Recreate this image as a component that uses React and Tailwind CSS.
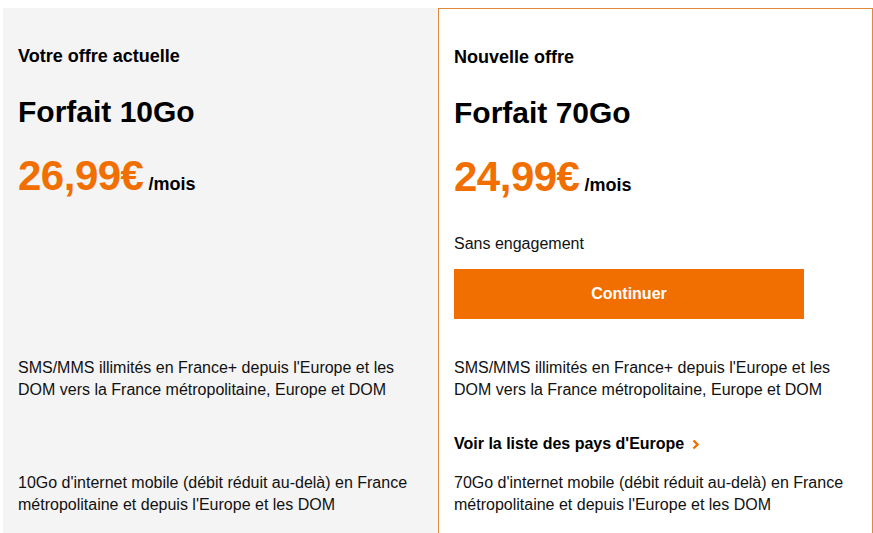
import React from "react";

function Chevron() {
  return (
    <svg width="8" height="11" viewBox="0 0 8 11" className="ml-[8px] mt-[1px]">
      <path d="M1.5 1.5 L5.5 5.5 L1.5 9.5" fill="none" stroke="#f16e00" strokeWidth="2.4" />
    </svg>
  );
}

function Price({ value }) {
  return (
    <div className="h-[46px] text-[42px] leading-[46px] whitespace-nowrap">
      <span className="font-bold text-[#f16e00] tracking-[-0.5px]">{value}</span>
      <span className="ml-[5px] text-[18px] leading-none font-bold">/mois</span>
    </div>
  );
}

export default function App() {
  return (
    <div
      className="w-[873px] h-[533px] overflow-hidden bg-white pt-[8px] pl-[3px] text-black"
      style={{ fontFamily: '"Liberation Sans", Arial, sans-serif' }}
    >
      <div className="flex h-[540px]">
        <div className="w-[435px] bg-[#f4f4f4] pl-[15px] pt-[38px]">
          <div className="text-[18px] leading-[20px] font-bold">Votre offre actuelle</div>
          <div className="mt-[29px] text-[30px] leading-[34px] font-bold">Forfait 10Go</div>
          <div className="mt-[24px]">
            <Price value="26,99€" />
          </div>
          <div className="mt-[158px] text-[16px] leading-[22px] text-[#111]">
            SMS/MMS illimités en France+ depuis l'Europe et les
            <br />
            DOM vers la France métropolitaine, Europe et DOM
          </div>
          <div className="mt-[71px] text-[16px] leading-[22px] text-[#111]">
            10Go d'internet mobile (débit réduit au-delà) en France
            <br />
            métropolitaine et depuis l'Europe et les DOM
          </div>
        </div>
        <div className="w-[435px] border border-[#e0893a] pl-[15px] pt-[38px]">
          <div className="text-[18px] leading-[20px] font-bold">Nouvelle offre</div>
          <div className="mt-[29px] text-[30px] leading-[34px] font-bold">Forfait 70Go</div>
          <div className="mt-[24px]">
            <Price value="24,99€" />
          </div>
          <div className="mt-[34px] text-[16px] leading-[20px] text-[#111]">Sans engagement</div>
          <button className="mt-[15px] w-[350px] h-[50px] bg-[#f16e00] text-white text-[16px] font-bold">
            Continuer
          </button>
          <div className="mt-[38px] text-[16px] leading-[22px] text-[#111]">
            SMS/MMS illimités en France+ depuis l'Europe et les
            <br />
            DOM vers la France métropolitaine, Europe et DOM
          </div>
          <div className="mt-[33px] text-[16px] leading-[20px] font-bold flex items-center">
            Voir la liste des pays d'Europe
            <Chevron />
          </div>
          <div className="mt-[18px] text-[16px] leading-[22px] text-[#111]">
            70Go d'internet mobile (débit réduit au-delà) en France
            <br />
            métropolitaine et depuis l'Europe et les DOM
          </div>
        </div>
      </div>
    </div>
  );
}
